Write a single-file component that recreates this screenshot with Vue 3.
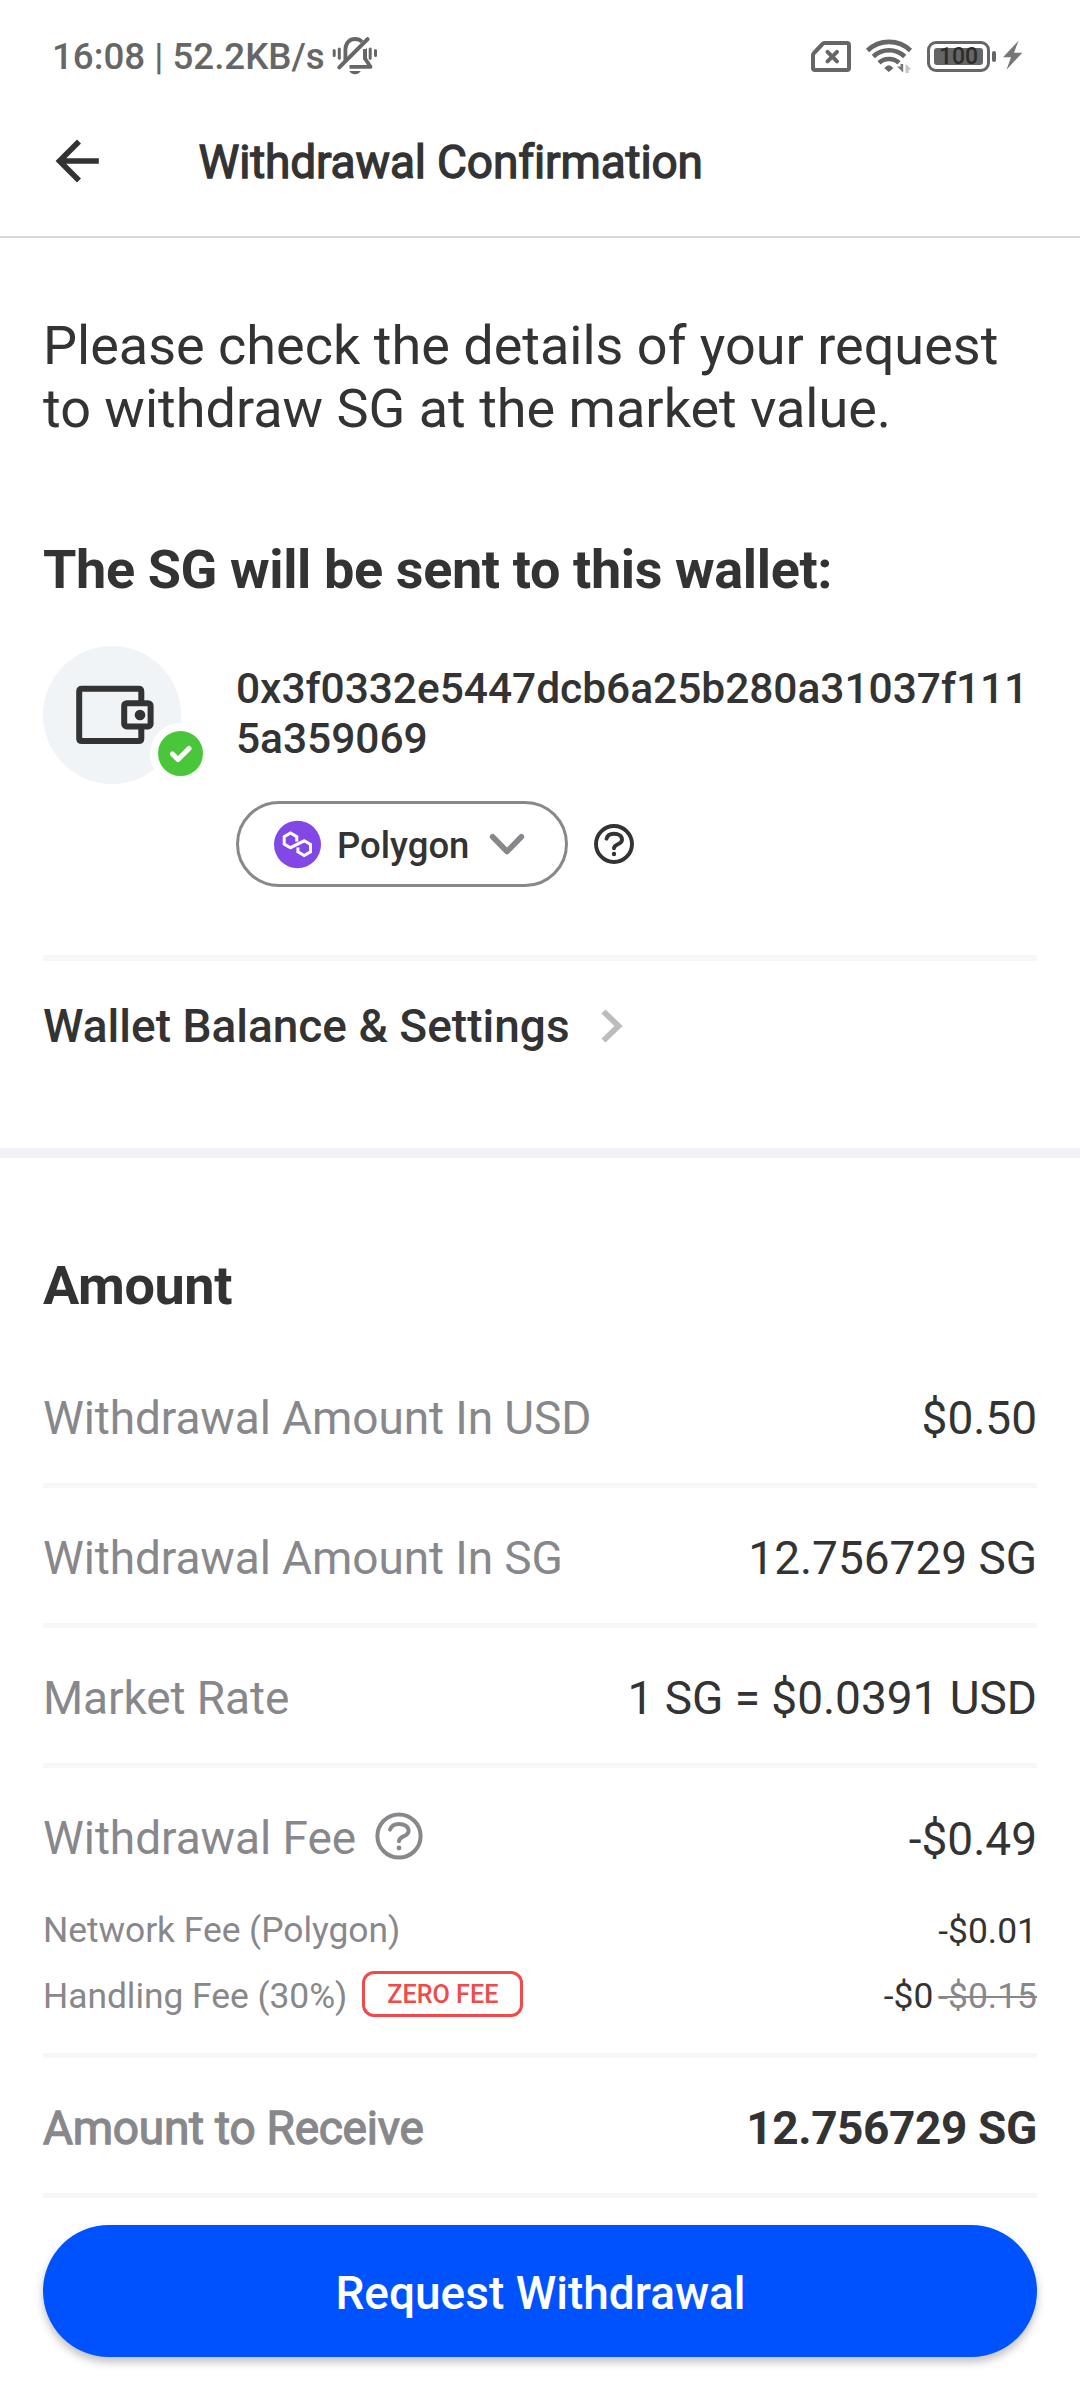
<script setup>
const amounts = [
  { label: 'Withdrawal Amount In USD', value: '$0.50' },
  { label: 'Withdrawal Amount In SG', value: '12.756729 SG' },
  { label: 'Market Rate', value: '1 SG = $0.0391 USD' },
]
</script>

<template>
  <div class="screen">
    <div class="status">
      <span class="clock">16:08 | 52.2KB/s</span>
      <svg class="bell" width="50" height="44" viewBox="0 0 50 44" fill="none" stroke="#666" stroke-linecap="round" stroke-linejoin="round">
        <g stroke-width="3">
          <path d="M4.2 16.5V21.5M9.3 15V24.3M40.2 15V24.3M45.5 16.5V21.5" />
        </g>
        <path d="M15.4 27V16C15.4 9 19.5 5 25 5C28 5 30.3 6 32 7.8" stroke-width="3.8" stroke-linecap="butt" />
        <path d="M35 15V24.5L40.5 32.9H19.5" stroke-width="3.8" stroke-linecap="butt" />
        <path d="M33.3 17.5L37 13.8V25.5L33.3 26Z" fill="#666" stroke="none" />
        <path d="M11 35.5L40.5 5.5" stroke="#fff" stroke-width="3" />
        <path d="M9.3 33.3L37.6 5.2" stroke-width="4" />
        <path d="M19.3 37H30.7C29.3 39.3 27.3 40.2 25 40.2C22.7 40.2 20.7 39.3 19.3 37Z" fill="#666" stroke="none" />
      </svg>
      <div class="status-right">
        <svg width="46" height="44" viewBox="808 34 46 44" fill="none" stroke="#666" stroke-width="4">
          <path d="M824 43H847Q849 43 849 45V68Q849 70 847 70H815Q813 70 813 68V55Q813 54 814 53L823 43.5Z" stroke-linejoin="round" />
          <path d="M827.5 51.8L837 61.3M837 51.8L827.5 61.3" stroke-linecap="round" />
        </svg>
        <svg width="60" height="44" viewBox="860 34 60 44" fill="none" stroke="#666" stroke-width="4.6">
          <path d="M867.5 50.5A31 31 0 0 1 910.5 50.5M873.3 56.5A23 23 0 0 1 904.7 56.5M879 62.8A15 15 0 0 1 899 62.8" />
          <path d="M884.3 68.2Q888.8 62.3 893.3 68.2L888.8 72Z" fill="#666" stroke="none" />
          <path d="M903.2 64V72.5L897 66.5H900.5V64Z" fill="#777" stroke="none" />
          <path d="M905.6 73V63.8L911.3 69.5H908.6V73Z" fill="#c4c4c4" stroke="none" />
        </svg>
        <div class="battery"><div class="level">100</div></div>
        <div class="nub"></div>
        <svg class="bolt" width="20" height="44" viewBox="1003 34 20 44">
          <path d="M1018.6 40.5L1003 57.3H1011L1006.5 69.8L1022.3 52.7H1014Z" fill="#777" />
        </svg>
      </div>
    </div>

    <header class="header">
      <svg width="46" height="46" viewBox="54 138 46 46" fill="none" stroke="#333" stroke-width="5.6">
        <path d="M79 141.5L59.5 161L79 180.5M59 161H98.8" />
      </svg>
      <h1 class="faux">Withdrawal Confirmation</h1>
    </header>

    <section class="intro">
      <p>Please check the details of your request<br>to withdraw SG at the market value.</p>
      <h2>The SG will be sent to this wallet:</h2>
      <div class="wallet">
        <div class="avatar">
          <svg width="70" height="60" viewBox="75 685 70 60" fill="none" stroke="#333" stroke-width="6">
            <path d="M141.3 701V691.5Q141.3 688.8 138.6 688.8H82Q79.2 688.8 79.2 691.5V738.4Q79.2 741.1 82 741.1H138.6Q141.3 741.1 141.3 738.4V728" />
            <rect x="124.2" y="703.2" width="26.4" height="23.2" rx="2.5" />
            <circle cx="140" cy="715" r="5.3" fill="#333" stroke="none" />
          </svg>
          <div class="badge">
            <svg width="24" height="20" viewBox="0 0 24 20" fill="none" stroke="#fff" stroke-width="5" stroke-linecap="round" stroke-linejoin="round">
              <path d="M3.5 10L9 15.5L20 4.5" />
            </svg>
          </div>
        </div>
        <div class="wallet-info">
          <div class="address">0x3f0332e5447dcb6a25b280a31037f111<br>5a359069</div>
          <div class="network">
            <div class="pill">
              <svg width="47" height="49" viewBox="0 -1 47 49">
                <ellipse cx="23.5" cy="23.5" rx="23.5" ry="23.8" fill="#8247e5" />
                <path d="M22.8 20.5V15.6L16.5 12L10.2 15.6V23.1L16.5 26.7L30.2 19.8L36.5 23.4V30.9L30.2 34.5L23.9 30.9V26.5" fill="none" stroke="#fff" stroke-width="3" />
              </svg>
              <span>Polygon</span>
              <svg class="down" width="36" height="24" viewBox="489 833 36 24" fill="none" stroke="#88888c" stroke-width="5.6" stroke-linecap="round" stroke-linejoin="round">
                <path d="M492.6 837.8L507 852.5L521.4 837.8" />
              </svg>
            </div>
            <svg width="40" height="42" viewBox="-20 -21 40 42" fill="none" stroke="#333" stroke-width="3.9">
              <circle r="18" />
              <path d="M-7.5 -5.3C-6.5 -8.8 -3.5 -10.2 0 -10.2C4.8 -10.2 8 -8 8 -4.3C8 1 0 -.6 0 4.2" stroke-linecap="round" />
              <circle cy="10" r="2.2" fill="#333" stroke="none" />
            </svg>
          </div>
        </div>
      </div>
      <div class="settings">
        <span>Wallet Balance &amp; Settings</span>
        <svg width="22" height="34" viewBox="601 1008.5 22 34" fill="none" stroke="#bcbcbc" stroke-width="5.8">
          <path d="M603.5 1011L618.5 1025.5L603.5 1040" />
        </svg>
      </div>
    </section>

    <section class="amount">
      <h2>Amount</h2>
      <div v-for="a in amounts" :key="a.label" class="row">
        <span class="label">{{ a.label }}</span>
        <span class="figure">{{ a.value }}</span>
      </div>
      <div class="fees">
        <div class="line main">
          <span class="label">Withdrawal Fee</span>
          <svg width="48" height="50" viewBox="-24 -25 48 50" fill="none" stroke="#88888c" stroke-width="4">
            <circle r="21.6" />
            <path d="M-9 -6.3C-7.6 -10.6 -4 -12.1 0 -12.1C5.6 -12.1 9.6 -9.4 9.6 -5.2C9.6 1.4 0 -.6 0 5.2" stroke-linecap="round" />
            <circle cy="12" r="2.4" fill="#88888c" stroke="none" />
          </svg>
          <span class="value">-$0.49</span>
        </div>
        <div class="line sub">
          <span class="label">Network Fee (Polygon)</span>
          <span class="value">-$0.01</span>
        </div>
        <div class="line sub">
          <span class="label">Handling Fee (30%)</span>
          <span class="tag">ZERO FEE</span>
          <span class="value2">-$0</span><s>-$0.15</s>
        </div>
      </div>
      <div class="row total">
        <span class="label faux">Amount to Receive</span>
        <b>12.756729 SG</b>
      </div>
      <button class="cta">Request Withdrawal</button>
    </section>
  </div>
</template>

<style>
body { margin: 0; background: #fff; }
</style>

<style scoped>
.screen {
  width: 1080px;
  height: 2400px;
  overflow: hidden;
  background: #fff;
  color: #333;
  font-family: Roboto, "Liberation Sans", sans-serif;
}
.screen * { box-sizing: border-box; }
.screen svg { display: block; flex: none; }
.screen h1, .screen h2, .screen p { margin: 0; }
.faux { -webkit-text-stroke: 1.3px currentColor; }

.status {
  display: flex;
  align-items: center;
  height: 86px;
  padding: 26px 57px 0 52px;
  color: #666;
}
.clock {
  width: 278px;
  padding-top: 2px;
  font-size: 36.7px;
  line-height: 44px;
  font-weight: 500;
  white-space: nowrap;
}
.status-right {
  display: flex;
  align-items: center;
  margin-left: auto;
}
.status-right svg + svg { margin-left: 6px; }
.battery {
  width: 63px;
  height: 31px;
  margin-left: 7px;
  padding: 4px;
  border: 3px solid #666;
  border-radius: 9px;
}
.level {
  height: 17px;
  border-radius: 3px;
  background: #666;
  color: #2c2c2c;
  font-size: 23px;
  line-height: 18px;
  font-weight: 500;
  text-align: center;
}
.nub {
  width: 4px;
  height: 11px;
  margin-left: 2px;
  border-radius: 2px;
  background: #666;
}
.screen .bolt { margin-left: 7px; }

.header {
  display: flex;
  align-items: center;
  height: 152px;
  padding-left: 54px;
  border-bottom: 2px solid #d8d8d8;
}
.header h1 {
  margin-left: 98.5px;
  padding-top: 2px;
  font-size: 46px;
  font-weight: 400;
  letter-spacing: -0.15px;
  line-height: 60px;
}

.intro {
  padding: 76px 43px 94px;
  border-bottom: 10px solid #f2f1f7;
}
.intro p { font-size: 54px; line-height: 63px; }
.intro h2, .amount h2 {
  font-size: 54px;
  line-height: 63px;
  font-weight: 700;
  letter-spacing: -0.39px;
}
.intro h2 { margin-top: 98px; }
.wallet {
  display: flex;
  margin-top: 45px;
}
.avatar {
  position: relative;
  flex: none;
  width: 138px;
  height: 138px;
  padding: 39px 0 0 32px;
  border-radius: 50%;
  background: #f0f4f7;
}
.avatar > svg { overflow: visible; }
.badge {
  position: absolute;
  left: 107px;
  top: 77px;
  display: flex;
  align-items: center;
  justify-content: center;
  width: 61px;
  height: 61px;
  border: 8px solid #fff;
  border-radius: 50%;
  background: #49c63a;
}
.wallet-info { margin-left: 55px; padding-top: 18px; }
.address {
  font-size: 42.5px;
  line-height: 50px;
  font-weight: 500;
  letter-spacing: -0.04px;
}
.network {
  display: flex;
  align-items: center;
  gap: 26px;
  margin-top: 37px;
}
.pill {
  display: flex;
  align-items: center;
  width: 332px;
  height: 86px;
  padding-left: 35px;
  border: 3px solid #88888c;
  border-radius: 43px;
  font-size: 36.5px;
  font-weight: 500;
}
.pill span { margin: 4px 0 0 16px; line-height: 44px; }
.down { margin-left: 20px; }
.settings {
  display: flex;
  align-items: center;
  gap: 31px;
  margin-top: 68px;
  padding-top: 37px;
  border-top: 6px solid #f7f7f7;
  font-size: 46px;
  line-height: 56px;
  font-weight: 500;
}

.amount { padding: 96px 43px 0; }
.amount h2 { margin-bottom: 31px; }
.label { color: #88888c; }
.row {
  display: flex;
  align-items: center;
  justify-content: space-between;
  height: 140px;
  padding-top: 5px;
  border-bottom: 5px solid #f7f7f7;
  font-size: 46px;
  line-height: 56px;
}
.row .label { letter-spacing: -0.1px; }
.figure { letter-spacing: -0.03px; }
.row b { font-weight: 700; letter-spacing: -0.4px; }
.total .label { letter-spacing: -0.25px; }
.fees {
  height: 290px;
  border-bottom: 5px solid #f7f7f7;
}
.line { display: flex; align-items: center; }
.value { margin-left: auto; padding-top: 1px; }
.value2 { margin-left: auto; }
.main { height: 140px; font-size: 46px; }
.main .label { letter-spacing: -0.06px; }
.main svg { margin: -5px 0 0 18.5px; }
.sub { height: 44px; font-size: 35.4px; line-height: 44px; }
.sub .label { letter-spacing: -0.04px; }
.sub + .sub { margin-top: 22px; }
.tag {
  width: 161px;
  height: 46px;
  margin: -4px 0 0 15px;
  border: 3px solid #f04a4a;
  border-radius: 12px;
  color: #f04a4a;
  font-size: 25.2px;
  line-height: 42px;
  font-weight: 500;
  text-align: center;
}
.sub s {
  margin-left: 5px;
  color: #88888c;
  text-decoration-thickness: 2px;
}
.cta {
  display: block;
  width: 994px;
  height: 132px;
  margin-top: 27px;
  padding: 4px 0 0 1px;
  border: 0;
  border-radius: 66px;
  background: #0052ff;
  box-shadow: 0 5px 8px rgba(0, 0, 0, 0.25);
  color: #fff;
  font: 500 46px/56px Roboto, "Liberation Sans", sans-serif;
}
</style>
